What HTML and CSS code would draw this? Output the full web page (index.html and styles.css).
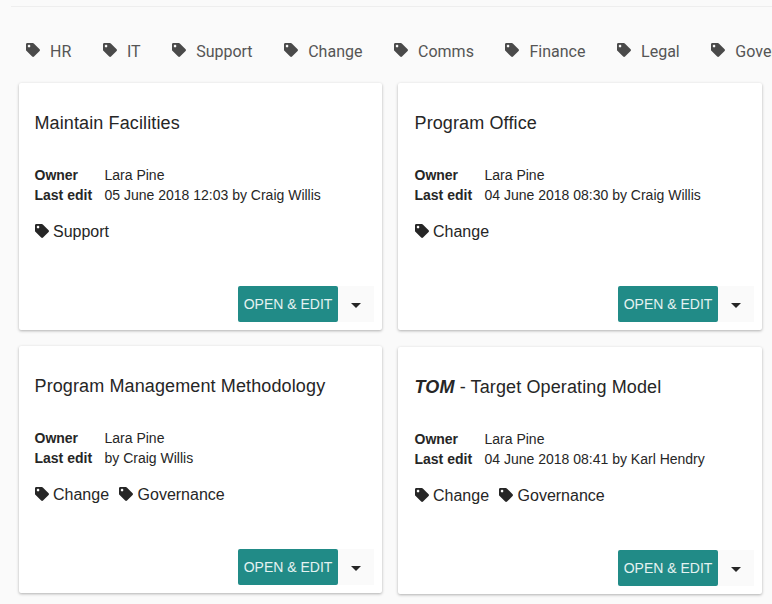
FILE: index.html
```html
<!DOCTYPE html>
<html lang="en">
<head>
<meta charset="utf-8">
<title>Models</title>
<link rel="stylesheet" href="styles.css">
</head>
<body>
<svg class="defs" width="0" height="0" aria-hidden="true"><symbol id="tag" viewBox="0 0 512 512"><path d="M0 252.118V48C0 21.49 21.49 0 48 0h204.118a48 48 0 0 1 33.941 14.059l211.882 211.882c18.745 18.745 18.745 49.137 0 67.882L293.823 497.941c-18.745 18.745-49.137 18.745-67.882 0L14.059 286.059A48 48 0 0 1 0 252.118zM112 64c-26.51 0-48 21.49-48 48s21.49 48 48 48 48-21.49 48-48-21.49-48-48-48z"/></symbol></svg>
<div class="page">
  <nav class="filters">
    <a class="filter"><svg class="filter-icon"><use href="#tag"/></svg>HR</a>
    <a class="filter"><svg class="filter-icon"><use href="#tag"/></svg>IT</a>
    <a class="filter"><svg class="filter-icon"><use href="#tag"/></svg>Support</a>
    <a class="filter"><svg class="filter-icon"><use href="#tag"/></svg>Change</a>
    <a class="filter"><svg class="filter-icon"><use href="#tag"/></svg>Comms</a>
    <a class="filter"><svg class="filter-icon"><use href="#tag"/></svg>Finance</a>
    <a class="filter"><svg class="filter-icon"><use href="#tag"/></svg>Legal</a>
    <a class="filter"><svg class="filter-icon"><use href="#tag"/></svg>Governance</a>
  </nav>
  <main class="columns">
    <div class="column column-left">
      <article class="card">
        <h2 class="card-title">Maintain Facilities</h2>
        <dl class="meta"><dt>Owner</dt><dd>Lara Pine</dd><dt>Last edit</dt><dd>05 June 2018 12:03 by Craig Willis</dd></dl>
        <div class="tags"><span class="tag"><svg class="tag-icon"><use href="#tag"/></svg>Support</span></div>
        <div class="actions"><button class="btn-open">OPEN &amp; EDIT</button><button class="btn-more" aria-label="More"><span class="caret"></span></button></div>
      </article>
      <article class="card">
        <h2 class="card-title">Program Management Methodology</h2>
        <dl class="meta"><dt>Owner</dt><dd>Lara Pine</dd><dt>Last edit</dt><dd>by Craig Willis</dd></dl>
        <div class="tags"><span class="tag"><svg class="tag-icon"><use href="#tag"/></svg>Change</span><span class="tag"><svg class="tag-icon"><use href="#tag"/></svg>Governance</span></div>
        <div class="actions"><button class="btn-open">OPEN &amp; EDIT</button><button class="btn-more" aria-label="More"><span class="caret"></span></button></div>
      </article>
    </div>
    <div class="column column-right">
      <article class="card">
        <h2 class="card-title">Program Office</h2>
        <dl class="meta"><dt>Owner</dt><dd>Lara Pine</dd><dt>Last edit</dt><dd>04 June 2018 08:30 by Craig Willis</dd></dl>
        <div class="tags"><span class="tag"><svg class="tag-icon"><use href="#tag"/></svg>Change</span></div>
        <div class="actions"><button class="btn-open">OPEN &amp; EDIT</button><button class="btn-more" aria-label="More"><span class="caret"></span></button></div>
      </article>
      <article class="card">
        <h2 class="card-title"><em>TOM</em> - Target Operating Model</h2>
        <dl class="meta"><dt>Owner</dt><dd>Lara Pine</dd><dt>Last edit</dt><dd>04 June 2018 08:41 by Karl Hendry</dd></dl>
        <div class="tags"><span class="tag"><svg class="tag-icon"><use href="#tag"/></svg>Change</span><span class="tag"><svg class="tag-icon"><use href="#tag"/></svg>Governance</span></div>
        <div class="actions"><button class="btn-open">OPEN &amp; EDIT</button><button class="btn-more" aria-label="More"><span class="caret"></span></button></div>
      </article>
    </div>
  </main>
</div>
</body>
</html>
```
FILE: styles.css
```css
* { box-sizing: border-box; }
html, body { margin: 0; height: 100%; }
body {
  background: #fafafa;
  color: #262626;
  font-family: "Liberation Sans", Arial, sans-serif;
  overflow: hidden;
}
.defs { position: absolute; }
.page {
  margin-left: 11px;
  margin-top: 6px;
  border-top: 1px solid #eeeeee;
}
.filters {
  display: flex;
  gap: 31.6px;
  height: 76px;
  padding: 35px 0 0 15px;
  overflow: hidden;
  white-space: nowrap;
  font-family: Roboto, sans-serif;
  font-size: 16px;
  line-height: 20px;
  color: #555555;
}
.filter { display: flex; align-items: center; height: 20px; flex: none; }
.filter-icon { width: 14px; height: 14px; margin-right: 10px; fill: #4a4a4a; flex: none; margin-top: -4px; }
.columns {
  display: flex;
  gap: 16px;
  padding-left: 8px;
}
.column { display: flex; flex-direction: column; gap: 16px; }
.column-left { width: 363px; }
.column-right { width: 364px; }
.card {
  background: #ffffff;
  border-radius: 2px;
  box-shadow: 0 1px 3px rgba(0,0,0,0.3);
  height: 247px;
  padding: 28px 16px 0;
  display: flex;
  flex-direction: column;
}
.column-left .card { padding-left: 15.5px; }
.column-right .card { padding-left: 16.5px; }
.column-right .card + .card { margin-top: 1px; }
.card-title {
  margin: 0;
  font-size: 18px;
  font-weight: 400;
  line-height: 24px;
  height: 24px;
  letter-spacing: 0.12px;
}
.card-title em { font-weight: 700; font-style: italic; }
.meta {
  margin: 30px 0 0;
  display: grid;
  grid-template-columns: 70px 1fr;
  font-size: 14px;
  line-height: 20px;
}
.meta dt { font-weight: 700; }
.meta dd { margin: 0; }
.tags { display: flex; gap: 10px; margin-top: 16px; font-size: 16px; line-height: 22px; }
.tag { display: flex; align-items: center; }
.tag-icon { width: 14px; height: 14px; margin-right: 4.5px; fill: #262626; flex: none; margin-top: -2px; }
.actions {
  margin-top: auto;
  margin-bottom: 8px;
  margin-right: -8px;
  display: flex;
  justify-content: flex-end;
}
.btn-open {
  width: 100px;
  height: 36px;
  border: 0;
  padding: 0;
  border-radius: 2px;
  background: #218b87;
  color: #e4f2f1;
  font-family: "Liberation Sans", Arial, sans-serif;
  font-size: 14px;
}
.btn-more {
  width: 36px;
  height: 36px;
  border: 0;
  padding: 2px 0 0;
  background: #fafafa;
  display: flex;
  align-items: center;
  justify-content: center;
}
.caret {
  width: 0;
  height: 0;
  border-left: 5px solid transparent;
  border-right: 5px solid transparent;
  border-top: 5px solid #262626;
}
```
